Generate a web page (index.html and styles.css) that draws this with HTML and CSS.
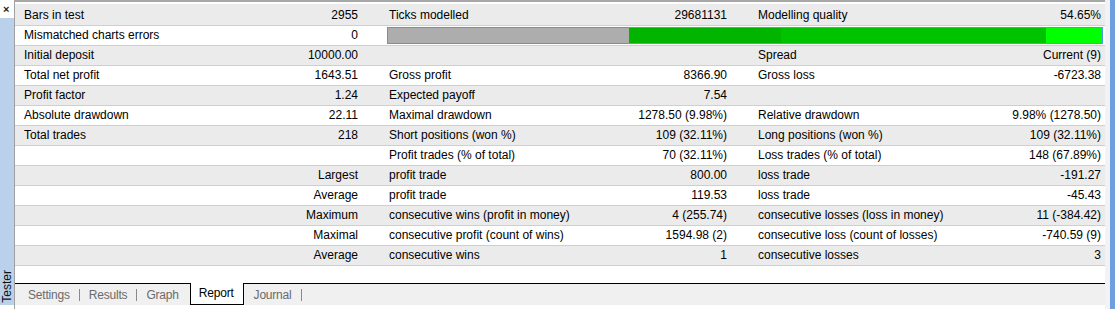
FILE: index.html
```html
<!DOCTYPE html>
<html lang="en">
<head>
    <meta charset="UTF-8">
    <title>Tester - Report</title>
    <link rel="stylesheet" href="styles.css">
</head>
<body>
    <div class="window">
        <div class="side">
            <div class="close">&times;</div>
            <div class="side-bar"><span class="side-title">Tester</span></div>
        </div>

        <div class="main">
            <div class="report">
                <div class="row">
                    <span class="label">Bars in test</span><span class="val">2955</span>
                    <span class="label">Ticks modelled</span><span class="val">29681131</span>
                    <span class="label">Modelling quality</span><span class="val last">54.65%</span>
                </div>
                <div class="row">
                    <span class="label">Mismatched charts errors</span><span class="val">0</span>
                    <div class="quality">
                        <div class="seg seg-gray"></div>
                        <div class="seg seg-dark"></div>
                        <div class="seg seg-green"></div>
                        <div class="seg seg-lime"></div>
                    </div>
                </div>
                <div class="row">
                    <span class="label">Initial deposit</span><span class="val">10000.00</span>
                    <span class="label"></span><span class="val"></span>
                    <span class="label">Spread</span><span class="val last">Current (9)</span>
                </div>
                <div class="row">
                    <span class="label">Total net profit</span><span class="val">1643.51</span>
                    <span class="label">Gross profit</span><span class="val">8366.90</span>
                    <span class="label">Gross loss</span><span class="val last">-6723.38</span>
                </div>
                <div class="row">
                    <span class="label">Profit factor</span><span class="val">1.24</span>
                    <span class="label">Expected payoff</span><span class="val">7.54</span>
                    <span class="label"></span><span class="val last"></span>
                </div>
                <div class="row">
                    <span class="label">Absolute drawdown</span><span class="val">22.11</span>
                    <span class="label">Maximal drawdown</span><span class="val">1278.50 (9.98%)</span>
                    <span class="label">Relative drawdown</span><span class="val last">9.98% (1278.50)</span>
                </div>
                <div class="row">
                    <span class="label">Total trades</span><span class="val">218</span>
                    <span class="label">Short positions (won %)</span><span class="val">109 (32.11%)</span>
                    <span class="label">Long positions (won %)</span><span class="val last">109 (32.11%)</span>
                </div>
                <div class="row">
                    <span class="label"></span><span class="val"></span>
                    <span class="label">Profit trades (% of total)</span><span class="val">70 (32.11%)</span>
                    <span class="label">Loss trades (% of total)</span><span class="val last">148 (67.89%)</span>
                </div>
                <div class="row">
                    <span class="label"></span><span class="val">Largest</span>
                    <span class="label">profit trade</span><span class="val">800.00</span>
                    <span class="label">loss trade</span><span class="val last">-191.27</span>
                </div>
                <div class="row">
                    <span class="label"></span><span class="val">Average</span>
                    <span class="label">profit trade</span><span class="val">119.53</span>
                    <span class="label">loss trade</span><span class="val last">-45.43</span>
                </div>
                <div class="row">
                    <span class="label"></span><span class="val">Maximum</span>
                    <span class="label">consecutive wins (profit in money)</span><span class="val">4 (255.74)</span>
                    <span class="label">consecutive losses (loss in money)</span><span class="val last">11 (-384.42)</span>
                </div>
                <div class="row">
                    <span class="label"></span><span class="val">Maximal</span>
                    <span class="label">consecutive profit (count of wins)</span><span class="val">1594.98 (2)</span>
                    <span class="label">consecutive loss (count of losses)</span><span class="val last">-740.59 (9)</span>
                </div>
                <div class="row">
                    <span class="label"></span><span class="val">Average</span>
                    <span class="label">consecutive wins</span><span class="val">1</span>
                    <span class="label">consecutive losses</span><span class="val last">3</span>
                </div>
            </div>

            <div class="tabs">
                <span class="tab">Settings</span><span class="sep"></span>
                <span class="tab">Results</span><span class="sep"></span>
                <span class="tab">Graph</span>
                <span class="tab active">Report</span>
                <span class="tab">Journal</span><span class="sep"></span>
            </div>
        </div>

        <div class="edge"></div>
    </div>
</body>
</html>
```

FILE: styles.css
```css
body {
    margin: 0;
    font-family: "Liberation Sans", Arial, sans-serif;
    font-size: 12px;
    color: #000;
    background: #fff;
}

.window {
    display: flex;
    width: 1115px;
    height: 309px;
    overflow: hidden;
}

/* left docked panel strip */
.side {
    width: 14px;
    display: flex;
    flex-direction: column;
    padding-bottom: 4px;
    box-sizing: border-box;
}
.close {
    height: 18px;
    line-height: 18px;
    padding-left: 3px;
    font-size: 11px;
    font-weight: bold;
    color: #222;
}
.side-bar {
    flex: 1;
    background: #b9d1ea;
    display: flex;
    align-items: flex-end;
    justify-content: center;
}
.side-title {
    writing-mode: vertical-rl;
    transform: rotate(180deg);
    font-size: 12px;
    color: #111;
    padding-top: 2px;
}

.main {
    flex: 1;
    display: flex;
    flex-direction: column;
    border-left: 1px solid #a0a0a0;
    border-top: 2px solid #a8a8a8;
}

.report {
    flex: 1;
    padding-top: 2px;
}

.row {
    display: grid;
    grid-template-columns: 185px 181px 219px 150px 210px 145px;
    height: 20px;
    line-height: 19px;
    box-sizing: border-box;
    border-bottom: 1px solid #cfcfcf;
    white-space: nowrap;
}
.row:nth-child(odd) {
    background: #ebebeb;
}
.row:first-child {
    height: 22px;
    padding-top: 2px;
}

.label {
    padding-left: 8px;
}
.row > .label:first-child {
    padding-left: 9px;
}
.val {
    text-align: right;
    padding-right: 23px;
}
.val.last {
    padding-right: 4px;
}

/* modelling quality bar */
.quality {
    grid-column: 3 / 7;
    display: flex;
    margin: 1px 2px 1px 6px;
    height: 17px;
    box-sizing: border-box;
    border: 1px solid #4a9ae8;
}
.seg {
    height: 100%;
}
.seg-gray {
    width: 241px;
    background: #adadad;
}
.seg-dark {
    width: 152px;
    background: #00b400;
}
.seg-green {
    width: 265px;
    background: #00c300;
}
.seg-lime {
    flex: 1;
    background: #00ff00;
}

/* bottom tabs */
.tabs {
    display: flex;
    align-items: center;
    height: 22px;
    box-sizing: border-box;
    border-top: 1px solid #000;
    background: #f0f0f0;
    padding-left: 4px;
    margin-bottom: 4px;
    letter-spacing: -0.2px;
}
.tab {
    padding: 0 9px;
    color: #6b6b6b;
    line-height: 20px;
}
.tab:first-child {
    padding-left: 9px;
}
.tab.active {
    color: #000;
    background: #fff;
    border: 1px solid #000;
    border-top: none;
    align-self: flex-start;
    margin-top: -1px;
    height: 21px;
    line-height: 21px;
    padding: 0 9px 0 8px;
    margin-left: 2px;
    margin-right: 1px;
}
.sep {
    width: 1px;
    height: 12px;
    background: #8a8a8a;
}

.edge {
    width: 10px;
    background: linear-gradient(to right, #f3f3f3 0, #f3f3f3 5px, #6f9ee0 5px);
}
```
